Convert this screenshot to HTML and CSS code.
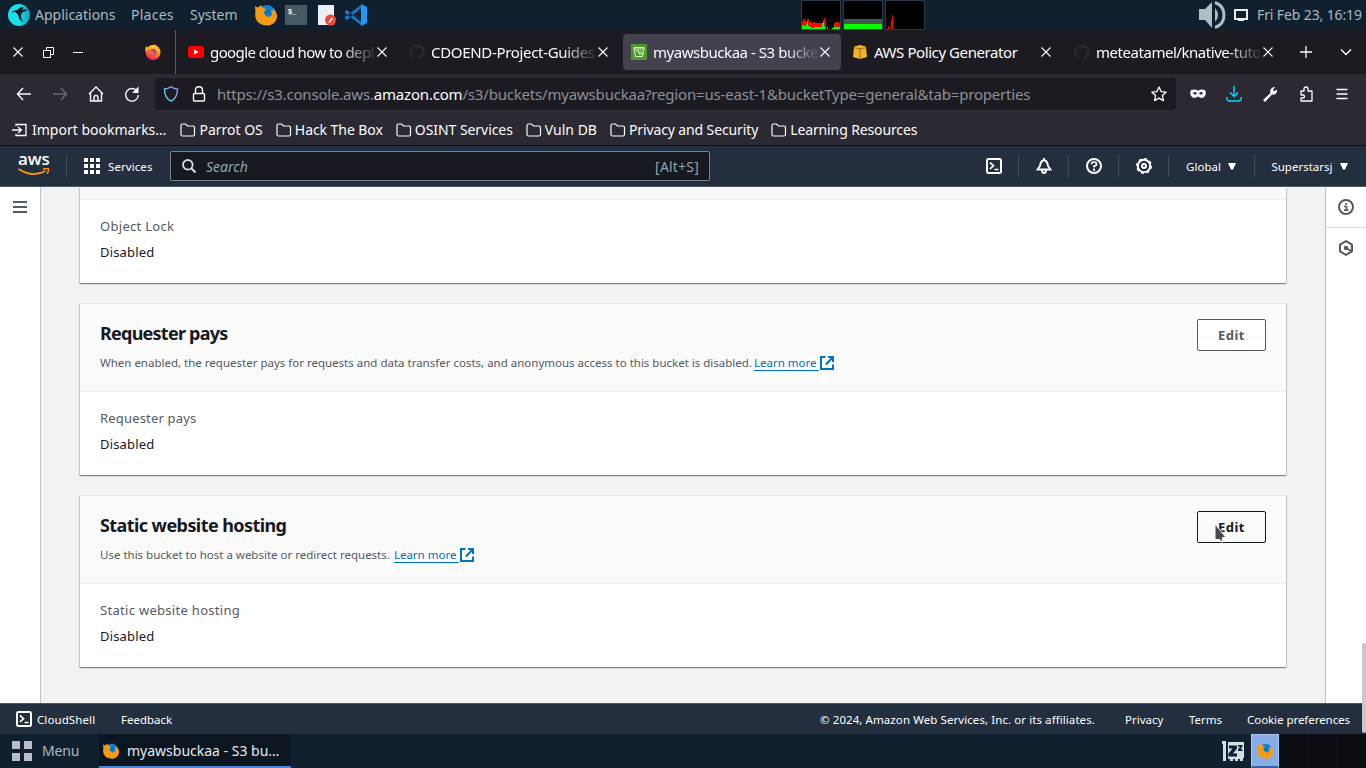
FILE: index.html
```html
<!DOCTYPE html>
<html lang="en"><head><meta charset="utf-8"><title>myawsbuckaa - S3 bucket</title><link rel="stylesheet" href="styles.css"></head>
<body>
<svg width="0" height="0" class="defs"><defs>
<linearGradient id="fire" x1="0.8" y1="0" x2="0.3" y2="1"><stop offset="0" stop-color="#fff44f"/><stop offset=".45" stop-color="#ff8a16"/><stop offset="1" stop-color="#f5156c"/></linearGradient>
<linearGradient id="shield" x1="0" x2="1" y1="1" y2="0"><stop offset="0" stop-color="#3fe1f5"/><stop offset="1" stop-color="#a28cf5"/></linearGradient>
<linearGradient id="teal"><stop offset=".5" stop-color="#18e2ee"/><stop offset="1" stop-color="#0fa3b0"/></linearGradient>
<symbol id="fox" viewBox="0 0 22 22"><circle cx="12" cy="9.500" r="8.500" fill="#0a84d6"/><path d="M0 2l3 1.500L6 1l2 3 3 1-2 3 1 3 3 2c3 0 4-2 4-4l-1-3 2 1 0-3 3 4c3 6-1 13-8 13.500C3 22-1 15 .5 8z" fill="#f79a17"/><path d="M9 8l3-1 1-2 3 1-2 3-2 2-2-1z" fill="#0876ba"/></symbol>
<symbol id="folder" viewBox="0 0 16 16"><path d="M1 3.500q0-1.500 1.500-1.500h3l2 2h5.500q1.500 0 1.500 1.500v7q0 1.500-1.500 1.500h-10.500q-1.500 0-1.500-1.500z" fill="none" stroke="currentColor" stroke-width="1.200"/></symbol>
<symbol id="x" viewBox="0 0 10 10"><path d="M.5 .5l9 9M9.500 .5l-9 9" stroke="currentColor" stroke-width="1.100"/></symbol>
<symbol id="cat" viewBox="0 0 16 16"><path fill="#24292e" d="M8 0C3.580 0 0 3.580 0 8c0 3.540 2.290 6.530 5.470 7.590.4.070.55-.17.55-.38 0-.19-.01-.82-.01-1.490-2.010.37-2.530-.49-2.690-.94-.09-.23-.48-.94-.82-1.130-.28-.15-.68-.52-.01-.53.63-.01 1.080.58 1.230.82.72 1.210 1.870.87 2.330.66.070-.52.280-.87.510-1.070-1.780-.2-3.640-.89-3.640-3.950 0-.87.310-1.590.820-2.150-.08-.2-.36-1.020.080-2.120 0 0 .67-.21 2.200.82a7.600 7.600 0 0 1 4 0c1.530-1.040 2.200-.82 2.200-.82.440 1.100.160 1.920.080 2.120.510.560.820 1.270.820 2.150 0 3.070-1.870 3.750-3.650 3.950.290.250.540.730.540 1.480 0 1.070-.01 1.930-.01 2.200 0 .210.150.460.550.380A8 8 0 0 0 16 8c0-4.420-3.580-8-8-8z"/></symbol>
<symbol id="shell" viewBox="0 0 16 16"><rect x="1" y="1" width="14" height="14" rx="1.500" fill="none" stroke="currentColor" stroke-width="2"/><path d="M4 4.500l3.500 3.200L4 11M8.500 11.500h4" fill="none" stroke="currentColor" stroke-width="1.700"/></symbol>
<symbol id="ext" viewBox="0 0 16 16"><path d="M6.500 2H2v12h12V9.500M9 2h5v5M14 2L7 9.500" fill="none" stroke="currentColor" stroke-width="2"/></symbol>
</defs></svg>

<header class="desk-panel">
 <svg class="parrot" viewBox="0 0 22 22"><circle cx="11" cy="11" r="11" fill="url(#teal)"/><path d="M3 8.500Q5 6 9 6l4-3 3 .5-2 2.500 6-1-2 2-4 1.500-1 3 .5 3 1.500 4-4-4-1-4-3-2.500z" fill="#0c1c2a"/></svg>
 <span class="d1">Applications</span><span class="d2">Places</span><span class="d3">System</span>
 <svg class="app a1"><use href="#fox"/></svg>
 <svg class="app a2" viewBox="0 0 22 20"><rect width="22" height="20" rx="1" fill="#455a64"/><text x="3" y="9" class="prompt">$_</text></svg>
 <svg class="app a3" viewBox="0 0 22 22"><path d="M3 1h16v20H3z" fill="#eceff1"/><circle cx="15.500" cy="16" r="5.500" fill="#f04438"/><path d="M13 18.500l4-5 1 1-3.500 4.500z" fill="#fff"/></svg>
 <svg class="app a4" viewBox="0 0 22 22"><path d="M0 7l2-1 14 12v3L0 9zM0 15l2 1L16 4V1L0 13z" fill="#1976c9"/><path d="M16 0l6 3v16l-6 3V16l-6-5 6-5z" fill="#2196f3"/><path d="M16 6v10l-6-5z" fill="#11202f"/></svg>
 <div class="graphs">
  <svg viewBox="0 0 38 28"><path d="M0 28v-8h1v-2h2v2h2v-2h2v3h3v1h1v-1h2v1h8v-2h1v-3h1v3h1v8h8v-6h1v-1h4v1h1v6z" fill="red"/><path d="M0 28v-4h2v1h2v-2h1v-2h1v4h2v1h2v1h2v-1h8v-4h1v-2h1v5h1v4zM25 28v-2h1v2zM30 28v-1h2v-2h1v1h5v2z" fill="#0f0"/></svg>
  <svg viewBox="0 0 38 28"><path d="M0 18h38v5H0z" fill="#46564c"/><path d="M0 23h38v5H0z" fill="#0f0"/></svg>
  <svg viewBox="0 0 38 28"><path d="M2 25h1v3H2zM5 19h1v-5h1v14H5z" fill="red"/></svg>
 </div>
 <svg class="vol" viewBox="0 0 28 28"><path d="M1 8h6l7-7v26l-7-8H1z" fill="#b0bec5"/><path d="M17 7q6 7 0 14z" fill="#b0bec5"/><path d="M17 1.500q9 3 9 12.500t-9 12.500" fill="none" stroke="#b0bec5" stroke-width="3"/></svg>
 <svg class="screen" viewBox="0 0 14 13"><path d="M1 1h12v9H1zM4 11h6" fill="none" stroke="#eceff1" stroke-width="2"/></svg>
 <span class="clock">Fri Feb 23, 16:19</span>
</header>

<div class="tabs">
 <div class="wm"><svg class="x"><use href="#x"/></svg><svg class="restore" viewBox="0 0 11 11"><path d="M.5 3.500h7v7h-7zM3.500 3V.5h7v7H8" fill="none" stroke="currentColor"/></svg><i></i><svg class="ff" viewBox="0 0 16 16"><circle cx="8" cy="8.500" r="7.500" fill="url(#fire)"/><path d="M0 7L1 2l2 2 2-1 0 2zM9 0q6 3 6 8l-4-3z" fill="#ffb52a"/><circle cx="8" cy="8.500" r="3.400" fill="#7542e5"/><path d="M3 5l3 0 3 1-2 2 4 0-2 4-4-1z" fill="#ff6b38" opacity=".8"/></svg></div>
 <div class="tab t1"><svg class="fav" viewBox="0 0 16 16"><rect y="2" width="16" height="12" rx="3" fill="red"/><path d="M6 5.500v5l4.500-2.500z" fill="#fff"/></svg><span class="fade">google cloud how to depl</span><svg class="x"><use href="#x"/></svg></div>
 <div class="tab t2"><svg class="fav"><use href="#cat"/></svg><span class="fade">CDOEND-Project-Guides</span><svg class="x"><use href="#x"/></svg></div>
 <div class="tab t3"><svg class="fav" viewBox="0 0 16 16"><path fill="#4b9a2c" d="M0 0h16v16H0z"/><path d="M3 4v-.5h10V5L11.500 12.500h-7L3 4.500zM3 5h10M5 7h3v3h3M9 7l3 3" fill="none" stroke="#e5f3df"/></svg><span class="fade">myawsbuckaa - S3 bucket</span><svg class="x"><use href="#x"/></svg></div>
 <div class="tab t4"><svg class="fav" viewBox="0 0 16 16"><path fill="#f5b02c" d="M2 2.500l6-1.500 6 1.500 1 10.500-7 2-7-2z"/><path d="M2 3.500l6 1.500 6-1.500M8 5v10" stroke="#8a5a12" fill="none" stroke-width=".8"/></svg><span class="fade">AWS Policy Generator</span><svg class="x"><use href="#x"/></svg></div>
 <div class="tab t5"><svg class="fav"><use href="#cat"/></svg><span class="fade">meteatamel/knative-tuto</span><svg class="x"><use href="#x"/></svg></div>
 <svg class="plus" viewBox="0 0 12 12"><path d="M6 0v12M0 6h12" stroke="currentColor" stroke-width="1.300"/></svg>
 <svg class="chev" viewBox="0 0 12 8"><path d="M1 1.500l5 5 5-5" fill="none" stroke="currentColor" stroke-width="1.400"/></svg>
</div>

<div class="nav">
 <svg class="back" viewBox="0 0 16 16"><path d="M7 2L1.500 8 7 14M1.500 8H15" fill="none" stroke="currentColor" stroke-width="1.400"/></svg>
 <svg class="fwd" viewBox="0 0 16 16"><path d="M9 2l5.500 6L9 14M14.500 8H1" fill="none" stroke="currentColor" stroke-width="1.400"/></svg>
 <svg class="home" viewBox="0 0 16 16"><path d="M1 8l7-7 7 7M2.500 7v8h11V7M6 15v-3.500q0-2 2-2t2 2V15" fill="none" stroke="currentColor" stroke-width="1.400"/></svg>
 <svg class="reload" viewBox="0 0 16 16"><path d="M13 5A6.300 6.300 0 1 0 14.300 9" fill="none" stroke="currentColor" stroke-width="1.400"/><path d="M14.500.500V7H8z" fill="currentColor"/></svg>
 <div class="url">
  <svg class="shield" viewBox="0 0 16 16"><path d="M8 .8q3 2.200 6.500 2.200 0 9-6.500 12.200Q1.500 12 1.500 3 5 3 8 .8z" fill="none" stroke="url(#shield)" stroke-width="1.400"/></svg>
  <svg class="lock" viewBox="0 0 16 16"><rect x="2.500" y="7.500" width="11" height="7.500" rx="1" fill="none" stroke="currentColor" stroke-width="1.400"/><path d="M4.500 7V4q0-3.300 3.500-3.300T11.500 4v3" fill="none" stroke="currentColor" stroke-width="1.400"/></svg>
  <span class="addr">https://s3.console.aws.<b>amazon.com</b>/s3/buckets/myawsbuckaa?region=us-east-1&amp;bucketType=general&amp;tab=properties</span>
  <svg class="star" viewBox="0 0 16 16"><path d="M8 1l2.100 4.600 5 .6-3.700 3.400 1 5L8 12.100l-4.400 2.500 1-5L.9 6.200l5-.6z" fill="none" stroke="currentColor" stroke-width="1.300" stroke-linejoin="round"/></svg>
 </div>
 <div class="tools">
 <svg viewBox="0 0 16 16"><path fill-rule="evenodd" d="M1 4q4-1.500 7 .8Q11 2.500 15 4q1.500 3 0 6-3 3.500-7 .5-4 3-7-.5-1.500-3 0-6zM3 7q2 3 4 .5Q5 5 3 7zm6 .5q2 2.500 4-.5-2-2-4 .5z" fill="#fbfbfe"/></svg>
 <svg viewBox="0 0 16 16"><path d="M8 0v10M4 6.500L8 10.500l4-4M.7 11q0 4 3 4h8.600q3 0 3-4" fill="none" stroke="#00ddff" stroke-width="1.400"/></svg>
 <svg viewBox="0 0 16 16"><path d="M1 14l7.500-7Q7 3 12 1l1 .3-2 2.500 1.200 1.400L15 3.500q.5 5.500-5 5L3 16z" fill="#fbfbfe"/></svg>
 <svg viewBox="0 0 16 16"><path d="M6 5V3q0-2 2-2t2 2v2h4v10H3v-3h2q1.500 0 1.500-1.500T5 9H3V5z" fill="none" stroke="#fbfbfe" stroke-width="1.300" stroke-linejoin="round"/></svg>
 <svg viewBox="0 0 16 16"><path d="M2.500 3.500h11M2.500 8h11M2.500 12.500h11" stroke="#fbfbfe" stroke-width="1.300"/></svg>
 </div>
</div>

<div class="marks">
 <svg class="imp" viewBox="0 0 16 16"><path d="M4 4V2.500h10v11H4V12M0 8h9M6 5l3.500 3L6 11" fill="none" stroke="currentColor" stroke-width="1.300"/></svg><span class="m0">Import bookmarks…</span>
 <svg><use href="#folder"/></svg><span class="m1">Parrot OS</span><svg><use href="#folder"/></svg><span class="m2">Hack The Box</span><svg><use href="#folder"/></svg><span class="m3">OSINT Services</span><svg><use href="#folder"/></svg><span class="m4">Vuln DB</span><svg><use href="#folder"/></svg><span class="m5">Privacy and Security</span><svg><use href="#folder"/></svg><span class="m6">Learning Resources</span>
</div>

<div class="aws">
 <div class="logo"><span>aws</span><svg viewBox="0 0 32 8"><path d="M.5 1q14 9 27 2" fill="none" stroke="#ff9900" stroke-width="1.700"/><path d="M25 1.200q5-1.500 5.500 0 .3 2-1.500 4.500" fill="none" stroke="#ff9900" stroke-width="1.500"/></svg></div>
 <div class="svc"><svg viewBox="0 0 16 16"><path d="M0 0h4v4H0zM6 0h4v4H6zM12 0h4v4h-4zM0 6h4v4H0zM6 6h4v4H6zM12 6h4v4h-4zM0 12h4v4H0zM6 12h4v4H6zM12 12h4v4h-4z" fill="#fff"/></svg><span>Services</span></div>
 <div class="search"><svg viewBox="0 0 14 14"><circle cx="5.800" cy="5.800" r="4.800" fill="none" stroke="#d5dbdb" stroke-width="1.800"/><path d="M9 9l4.500 4.500" stroke="#d5dbdb" stroke-width="2"/></svg><em>Search</em><span>[Alt+S]</span></div>
 <div class="icons">
  <div><svg><use href="#shell"/></svg></div>
  <div><svg viewBox="0 0 16 16"><path d="M8 0v2M8 2Q4.500 3 4 8L1.500 11.500h13L12 8Q11.500 3 8 2zM6 12q0 3 2 3t2-3" fill="none" stroke="#fff" stroke-width="1.900"/></svg></div>
  <div><svg viewBox="0 0 16 16"><circle cx="8" cy="8" r="7" fill="none" stroke="#fff" stroke-width="2"/><path d="M5.500 6.200Q5.500 4 8 4t2.500 2Q10.500 8 8 8v1.500M8 10.500V13" fill="none" stroke="#fff" stroke-width="1.700"/></svg></div>
  <div><svg viewBox="0 0 16 16"><circle cx="8" cy="8" r="6.200" fill="none" stroke="#fff" stroke-width="2"/><circle cx="8" cy="8" r="7.300" fill="none" stroke="#fff" stroke-width="1.400" stroke-dasharray="3 2.730"/><circle cx="8" cy="8" r="2" fill="none" stroke="#fff" stroke-width="2"/></svg></div>
  <div class="glob"><span>Global</span><svg viewBox="0 0 8 7"><path d="M0 0h8L5 6.500H3z" fill="#fff"/></svg></div>
  <div class="acct"><span>Superstarsj</span><svg viewBox="0 0 8 7"><path d="M0 0h8L5 6.500H3z" fill="#fff"/></svg></div>
 </div>
</div>

<div class="page">
 <aside class="left"><i></i><i></i><i></i></aside>
 <main>
  <section class="card first"><div class="strip"></div><div class="body"><label>Object Lock</label><p>Disabled</p></div></section>
  <section class="card"><div class="head"><div><h2>Requester pays</h2><div class="desc"><span>When enabled, the requester pays for requests and data transfer costs, and anonymous access to this bucket is disabled.</span> <a><span>Learn more</span></a><svg><use href="#ext"/></svg></div></div><button><span>Edit</span></button></div><div class="body"><label class="rp">Requester pays</label><p>Disabled</p></div></section>
  <section class="card"><div class="head"><div><h2 class="tight">Static website hosting</h2><div class="desc wide"><span>Use this bucket to host a website or redirect requests.</span> <a><span>Learn more</span></a><svg><use href="#ext"/></svg></div></div><button class="hover"><span>Edit</span><svg class="cursor" viewBox="0 0 13 20"><path d="M1 1v15.500h4.500l2.500 3 .5-5H12z" fill="#4a4a4a" stroke="#fff"/></svg></button></div><div class="body"><label>Static website hosting</label><p>Disabled</p></div></section>
 </main>
 <aside class="right">
  <div><svg viewBox="0 0 16 16"><circle cx="8" cy="8" r="7" fill="none" stroke="#545b64" stroke-width="2"/><path d="M8 4v2M6 7.500h2.500V11M6 11.200h4.500" fill="none" stroke="#545b64" stroke-width="1.700"/></svg></div>
  <div><svg viewBox="0 0 16 16"><path d="M8 1.200l6 3.300v7l-6 3.300-6-3.300v-7z" fill="none" stroke="#545b64" stroke-width="2"/><circle cx="8" cy="8" r="2.200" fill="#545b64"/><path d="M8 8l5 3" stroke="#545b64" stroke-width="2"/></svg></div>
 </aside>
 <div class="thumb"></div>
</div>

<footer><svg><use href="#shell"/></svg><span class="f1">CloudShell</span><span class="f2">Feedback</span><span class="f3">© 2024, Amazon Web Services, Inc. or its affiliates.</span><span class="f4">Privacy</span><span class="f5">Terms</span><span class="f6">Cookie preferences</span></footer>

<div class="task">
 <svg class="grid" viewBox="0 0 20 20"><path d="M0 0h8v8H0zM12 0h8v8h-8zM0 12h8v8H0zM12 12h8v8h-8z" fill="#b8c0d0"/></svg><span class="menu">Menu</span>
 <div class="win"><svg><use href="#fox"/></svg><span>myawsbuckaa - S3 bu…</span></div>
 <svg class="ram" viewBox="0 0 22 20"><path d="M0 0h4v20H1V3H0zM6 1h16v16h-1v3h-3v-2h-2v2h-3v-2h-2v2H8v-2H6z" fill="#d5dde4"/><path d="M7 4.500h8v3l-4 5h4v3H6.500v-3l4-5H7zM16 4h4.500v1.500l-2 3h2V10H16V8.500l2-3h-2z" fill="#11202f"/></svg>
 <div class="ws on"><svg><use href="#fox"/></svg></div><div class="ws"></div><div class="ws"></div><div class="ws"></div>
</div>
</body></html>
```
FILE: styles.css
```css
*{box-sizing:border-box}
body{margin:0;width:1366px;height:768px;overflow:hidden;font:14px "Noto Sans",sans-serif;color:#16191f;display:flex;flex-direction:column}
.defs{position:absolute}
svg{flex:none;display:block}
span,em,label,p,h2{white-space:nowrap}
.desk-panel{height:30px;flex:none;background:#11202f;display:flex;align-items:center;color:#a9b9c2}
.desk-panel span{padding-bottom:2px}
.parrot{width:22px;height:22px;margin-left:8px}
.d1{margin-left:5px;width:96px}.d2{width:59px;letter-spacing:.25px}.d3{width:65px}
.app{width:22px;height:22px}
.a2{height:20px;margin-left:8px}.a3{margin-left:8px}.a4{margin-left:8px}
.prompt{font:bold 7px "Liberation Mono",monospace;fill:#fff}
.graphs{display:flex;gap:2px;margin-left:434px;height:30px}
.graphs svg{width:40px;height:30px;background:#000;border:1px solid #26394a}
.vol{width:28px;height:28px;margin-left:273px}
.screen{width:14px;height:13px;margin-left:8px}
.clock{margin-left:9px;letter-spacing:-.12px}
.tabs{height:44px;flex:none;background:#1c1b22;display:flex;align-items:center;color:#fbfbfe;font-size:15px}
.tabs .x{width:10px;height:10px}
.wm{width:176px;height:44px;border-right:1px solid #5b5a63;display:flex;align-items:center;padding-left:13px}
.restore{width:11px;height:11px;margin-left:20px}
.wm i{width:10px;height:1px;background:#fbfbfe;margin-left:19px}
.ff{width:16px;height:16px;margin-left:62px}
.tab{height:36px;display:flex;align-items:center;border-radius:4px;width:218px;flex:none;padding-left:8px}
.t1{margin-left:4px;width:221px}.t2{width:222px}.t4{width:220px;padding-left:12px}.t5{padding-left:13px}
.t3{background:#42414d}
.t4 .fav{margin-left:-1px}
.fav{width:16px;height:16px}
.fade{width:164px;flex:none;margin:0 3px 0 6px;letter-spacing:-.46px;-webkit-mask-image:linear-gradient(90deg,#000 80%,rgba(0,0,0,.1));mask-image:linear-gradient(90deg,#000 80%,rgba(0,0,0,.1))}
.t1 .fade{letter-spacing:-.6px}
.t2 .fade{letter-spacing:-.32px}
.t4 .fade{letter-spacing:-.42px;-webkit-mask-image:none;mask-image:none}
.plus{width:12px;height:12px;margin-left:21px}.chev{width:12px;height:8px;margin-left:28px}
.nav{height:40px;flex:none;background:#2b2a33;display:flex;align-items:center;color:#fbfbfe}
.nav svg{width:16px;height:16px}
.back{margin-left:16px}.fwd{margin-left:20px;color:#6b6a73}.home{margin-left:20px}.reload{margin-left:20px}
.url{margin-left:15px;width:1021px;flex:none;height:32px;border-radius:4px;background:#1c1b22;display:flex;align-items:center;font-size:15px;letter-spacing:-.187px;color:#8f8f98}
.url b{font-weight:400;color:#fbfbfe}
.shield{margin-left:8px}.lock{margin-left:12px;color:#fbfbfe}
.addr{margin-left:10px;width:934px}.star{color:#fbfbfe}
.tools{display:flex;gap:20px;margin-left:14px}
.marks{height:32px;flex:none;background:#2b2a33;border-bottom:1px solid #0c0c0d;display:flex;align-items:center;color:#fbfbfe;padding-left:12px}
.marks svg{width:16px;height:16px;margin-right:3px}
.marks span{margin-right:13px}
.marks .m0{margin-left:1px;margin-right:14px}
.marks .m2{letter-spacing:-.06px}
.marks .m3{letter-spacing:-.06px}
.marks .m5{letter-spacing:-.12px}.marks .m6{letter-spacing:-.12px}
.aws{height:41px;flex:none;background:#232f3e;border-bottom:1px solid #4c5865;display:flex;align-items:center;color:#fff;font-size:11.500px}
.logo{width:67px;height:22px;border-right:1px solid #414d5c;padding-left:18px}
.logo span{display:block;font:600 17px/12px "Open Sans",sans-serif;letter-spacing:-.1px;margin-top:-2px}
.logo svg{width:32px;height:8px;margin-top:3px}
.svc{display:flex;align-items:center;width:103px;flex:none;padding-left:17px}.svc svg{width:16px;height:16px;margin-right:8px}
.svc span{letter-spacing:.08px}
.search{width:540px;flex:none;height:30px;border:1px solid #7b868c;border-radius:2px;background:#16191f;display:flex;align-items:center;padding:0 10px 0 11px;font-size:14px;color:#95a5a6}
.search svg{width:14px;height:14px;margin-right:10px}.search em{flex:1}
.search span{letter-spacing:.2px}
.icons{display:flex;margin-left:259px;align-items:center}
.icons div{width:50px;flex:none;height:22px;display:flex;align-items:center;justify-content:center;border-right:1px solid #414d5c}
.icons svg{width:16px;height:16px}
.icons .glob{width:86px;padding-right:1px}.icons .acct{width:111px;border:0;padding-right:2px}
.icons .glob svg,.icons .acct svg{width:8px;height:7px;margin-left:7px}
.page{height:516px;flex:none;display:flex;position:relative;background:#f1f3f3}
.left{width:41px;border-right:1px solid #bfc5c7;background:#fff;padding:14px 13px}
.left i{display:block;height:2px;background:#545b64;margin-bottom:3px}
main{width:1284px;padding:0 39px;display:flex;flex-direction:column;gap:20px}
.right{width:41px;border-left:1px solid #bfc5c7;background:#fff}
.right div{height:41px;border-bottom:1px solid #d5dbdb;display:flex;align-items:center;justify-content:center}
.right div+div{border:0;height:40px}.right svg{width:16px;height:16px}
.card{background:#fff;height:172px;border-top:1px solid #eaeded;box-shadow:0 1px 1px rgba(0,28,36,.3),1px 1px 1px rgba(0,28,36,.15),-1px 1px 1px rgba(0,28,36,.15);flex:none}
.first{height:96px;border:0}
.strip{height:13px;background:#fafafa;border-bottom:1px solid #eaeded}
.head{height:88px;background:#fafafa;border-bottom:1px solid #eaeded;display:flex;justify-content:space-between;padding:15px 20px}
h2{margin:0;font:bold 18px/28px "Noto Sans",sans-serif;letter-spacing:-.76px}
.tight{letter-spacing:-.58px}
.desc{font-size:11.500px;line-height:20px;display:flex;color:#545b64;margin-top:6px}
.desc a{color:#0073bb;border-bottom:1px solid #0073bb;height:18px;margin-left:2px;padding-right:2px}
.wide a{margin-left:4px;padding-right:3px}
.desc svg{width:16px;height:16px;color:#0073bb;margin-top:2px}
button{position:relative;width:69px;height:32px;border:1px solid #545b64;border-radius:2px;background:#fff;font:bold 13px "Noto Sans",sans-serif;letter-spacing:.5px;color:#545b64;padding:0}
.hover{background:#fafafa;color:#16191f;border-color:#16191f}
.cursor{position:absolute;left:16px;top:11px;width:13px;height:20px}
.body{padding:15px 20px}
label,p{display:block;margin:0;font-size:13px;line-height:22px}
label{color:#545b64;margin-bottom:4px;letter-spacing:.3px}
.rp{letter-spacing:.18px}
p{letter-spacing:.18px}
.thumb{position:absolute;right:0;top:456px;width:4px;height:90px;background:#c8c8c8;z-index:2;border-radius:2px}
footer{height:31px;flex:none;background:#232f3e;border-top:1px solid #4c5865;display:flex;align-items:center;color:#fff;font-size:11.500px}
footer svg{width:16px;height:16px;margin:0 5px 0 16px}
.f1{width:84px;letter-spacing:.1px}.f2{width:699px}.f3{width:305px;letter-spacing:.08px}.f4{width:64px}.f5{width:58px}.f6{letter-spacing:-.05px}
.task{height:34px;flex:none;background:#11202f;display:flex;align-items:center;color:#a9b9c2}
.grid{width:20px;height:20px;margin-left:12px}
.menu{margin-left:10px;width:57px;padding-bottom:2px;letter-spacing:-.2px}
.win{width:192px;height:34px;background:#0b1620;border-bottom:2px solid #4a86d8;display:flex;align-items:center;color:#e4eaee;padding-left:4px}
.win svg{width:16px;height:16px;margin:2px 8px 0 0}
.ram{width:22px;height:20px;margin-left:931px}
.ws{width:29px;height:34px;background:#0b0d12;border-left:1px solid #15181e}
.on{width:28px;margin-left:7px;background:#87aee8;border:1px solid #a8c8f4;border-bottom:2px solid #35639f;display:flex;align-items:center;justify-content:center}
.on svg{width:16px;height:16px}
```
